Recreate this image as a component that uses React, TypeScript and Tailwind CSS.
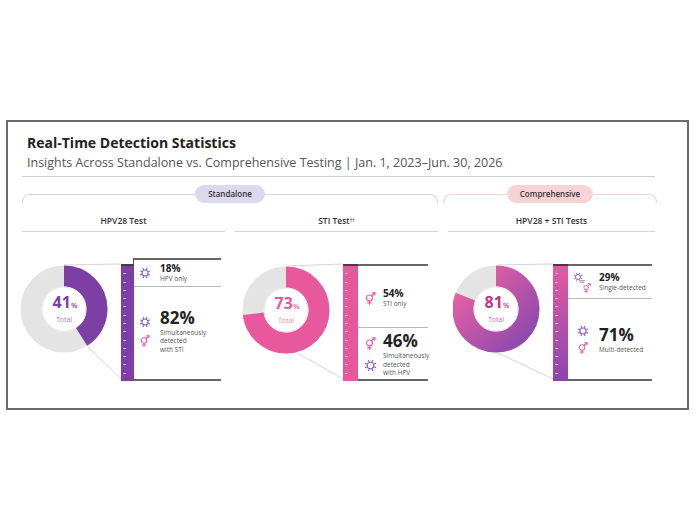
import type { ReactNode } from 'react';

// ── Colores ────────────────────────────────────────────────────────────────

const MORADO = '#7c3fa3';
const ROSA = '#e8589c';
const MAGENTA = '#c1358a';

// ── Iconos ─────────────────────────────────────────────────────────────────

function IconoVirus({ size = 12 }: { size?: number }) {
  const puntas = [0, 45, 90, 135, 180, 225, 270, 315];
  return (
    <svg width={size} height={size} viewBox="0 0 24 24" fill="none" stroke="#8e62c6" strokeWidth={2.2}>
      <circle cx="12" cy="12" r="6" />
      {puntas.map((a) => {
        const r = ((a + 22.5) * Math.PI) / 180;
        return (
          <g key={a}>
            <line x1={12 + 6 * Math.cos(r)} y1={12 + 6 * Math.sin(r)} x2={12 + 8.5 * Math.cos(r)} y2={12 + 8.5 * Math.sin(r)} />
            <circle cx={12 + 9.8 * Math.cos(r)} cy={12 + 9.8 * Math.sin(r)} r="1.4" fill="#8e62c6" stroke="none" />
          </g>
        );
      })}
    </svg>
  );
}

function IconoGenero({ size = 12 }: { size?: number }) {
  return (
    <svg width={size} height={size} viewBox="0 0 24 24" fill="none" stroke="#ea5fa2" strokeWidth={2.2} strokeLinecap="round">
      <circle cx="10" cy="11" r="5.5" />
      <line x1="10" y1="16.5" x2="10" y2="23" />
      <line x1="6.5" y1="20" x2="13.5" y2="20" />
      <line x1="14" y1="7" x2="20" y2="1.5" />
      <polyline points="15.5,1.5 20,1.5 20,6" />
    </svg>
  );
}

// ── Dona con líneas de conexión ─────────────────────────────────────────────

type PropsDona = {
  pct: number;
  cx: number;
  cy: number;
  color: string;
  colorTexto: string;
  numero: string;
  arriba: [number, number];
  abajo: [number, number];
  gradiente?: boolean;
  ancho?: number;
};

function Dona({ pct, cx, cy, color, colorTexto, numero, arriba, abajo, gradiente, ancho = 101 }: PropsDona) {
  const r = 33;
  const circ = 2 * Math.PI * r;
  const id = `g${numero}`;
  return (
    <svg width={ancho} height={123} className="shrink-0">
      <defs>
        <linearGradient id={id} x1="1" y1="0" x2="0" y2="1">
          <stop offset="0" stopColor="#ee62a3" />
          <stop offset="1" stopColor="#8a48ad" />
        </linearGradient>
      </defs>
      <line x1={arriba[0]} y1={arriba[1]} x2={ancho} y2={6} stroke="#d4d4d4" strokeWidth={1} />
      <line x1={abajo[0]} y1={abajo[1]} x2={ancho} y2={121} stroke="#d4d4d4" strokeWidth={1} />
      <circle cx={cx} cy={cy} r={r} fill="none" stroke="#e4e4e4" strokeWidth={21} />
      <circle
        cx={cx}
        cy={cy}
        r={r}
        fill="none"
        stroke={gradiente ? `url(#${id})` : color}
        strokeWidth={21}
        strokeDasharray={`${(circ * pct) / 100} ${circ}`}
        transform={`rotate(-90 ${cx} ${cy})`}
      />
      <circle cx={cx} cy={cy} r={22} fill="white" stroke="#e6e6e6" strokeWidth={1} />
      <text x={cx + 1} y={cy - 1} textAnchor="middle" fill={colorTexto} fontFamily="Open Sans, sans-serif">
        <tspan fontSize="16" fontWeight="700">{numero}</tspan>
        <tspan fontSize="7.5" fontWeight="600">%</tspan>
      </text>
      <text x={cx} y={cy + 12.5} textAnchor="middle" fill={colorTexto} fillOpacity={0.75} fontSize="7" fontFamily="Open Sans, sans-serif">
        Total
      </text>
    </svg>
  );
}

// ── Barra vertical con marcas ──────────────────────────────────────────────

function Barra({ clase }: { clase: string }) {
  return (
    <div className={`flex h-[117px] flex-col justify-evenly border-t-2 border-[#3f3f3f] pl-[2px] ${clase}`}>
      {Array.from({ length: 13 }).map((_, i) => (
        <div key={i} className="h-px w-[3px] bg-white/60" />
      ))}
    </div>
  );
}

// ── Texto de fila ──────────────────────────────────────────────────────────

function Etiqueta({ children }: { children: ReactNode }) {
  return <div className="text-[6.5px] leading-[8.5px] text-[#555]">{children}</div>;
}

function Cifra({ children, grande }: { children: ReactNode; grande?: boolean }) {
  return grande ? (
    <div className="text-[17px] font-bold leading-[23px] text-[#222]">{children}</div>
  ) : (
    <div className="text-[10px] font-bold leading-[13px] text-[#222]">{children}</div>
  );
}

function Grupo({ ancho, titulo, pill, linea }: { ancho: string; titulo: string; pill: string; linea: string }) {
  return (
    <div className={`flex h-[18px] ${ancho}`}>
      <div className={`mt-[9px] h-[9px] flex-1 rounded-tl-[8px] border-l border-t ${linea}`} />
      <div className={`flex h-[18px] items-center rounded-full px-[13px] text-[8px] font-semibold text-[#333] ${pill}`}>
        {titulo}
      </div>
      <div className={`mt-[9px] h-[9px] flex-1 rounded-tr-[8px] border-r border-t ${linea}`} />
    </div>
  );
}

function Encabezado({ children }: { children: ReactNode }) {
  return (
    <div className="border-b border-[#d3d3d3] pb-[4px] text-center text-[8.5px] font-semibold leading-[12px] text-[#333]">
      {children}
    </div>
  );
}

export default function App() {
  return (
    <div className="min-h-screen bg-white pl-[6px] pt-[120px] font-['Open_Sans',sans-serif]">
      <div className="h-[290px] w-[683px] border-2 border-[#6a6a6a] pl-[14px] pr-[30px] pt-[12px]">
        <div className="pl-[5px]">
          <h1 className="text-[14px] font-bold leading-[17px] text-[#222]">Real-Time Detection Statistics</h1>
          <p className="mt-[4px] text-[12.5px] leading-[16px] text-[#555]">
            Insights Across Standalone vs. Comprehensive Testing | Jan. 1, 2023–Jun. 30, 2026
          </p>
        </div>
        <div className="mt-[5px] h-px w-[633px] bg-[#cfcfcf]" />

        {/* Grupos: Standalone / Comprehensive */}
        <div className="mt-[8px] flex gap-[5px]">
          <Grupo ancho="w-[416px]" titulo="Standalone" pill="bg-[#dcd8ee]" linea="border-[#d8d5e6]" />
          <Grupo ancho="w-[214px]" titulo="Comprehensive" pill="bg-[#f8d3d3]" linea="border-[#f3d2d2]" />
        </div>

        <div className="mt-[12px] grid w-[633px] grid-cols-[203px_203px_207px] gap-x-[10px]">
          <Encabezado>HPV28 Test</Encabezado>
          <Encabezado>
            STI Test<sup className="text-[5px]">††</sup>
          </Encabezado>
          <Encabezado>HPV28 + STI Tests</Encabezado>

          {/* HPV28 */}
          <div className="mt-[26px] ml-[-2px] flex items-start">
            <Dona pct={41} cx={44} cy={51} color={MORADO} colorTexto={MORADO} numero="41" arriba={[44, 7]} abajo={[68, 89]} />
            <div className="flex w-[13px] flex-col">
              <div className="h-[6px] border-r border-[#555]" />
              <Barra clase="bg-[#7c3fa6]" />
            </div>
            <div className="flex h-[123px] w-[87px] flex-col border-y-2 border-[#666]">
              <div className="flex h-[26px] items-center gap-[9px] pl-[5px]">
                <IconoVirus />
                <div>
                  <Cifra>18%</Cifra>
                  <Etiqueta>HPV only</Etiqueta>
                </div>
              </div>
              <div className="h-px bg-[#b8b8b8]" />
              <div className="flex flex-1 items-center gap-[9px] pb-[6px] pl-[5px]">
                <div className="flex flex-col gap-[7px] pt-[2px]">
                  <IconoVirus />
                  <IconoGenero />
                </div>
                <div>
                  <Cifra grande>82%</Cifra>
                  <Etiqueta>
                    <div className="whitespace-nowrap">Simultaneously</div>
                    <div>detected</div>
                    <div>with STI</div>
                  </Etiqueta>
                </div>
              </div>
            </div>
          </div>

          {/* STI */}
          <div className="mt-[26px] ml-[7px] flex items-start">
            <Dona pct={73} cx={44} cy={52} color={ROSA} colorTexto={ROSA} numero="73" arriba={[45, 8]} abajo={[55, 95]} />
            <div className="mt-[6px] w-[15px]">
              <Barra clase="bg-[#e8589c]" />
            </div>
            <div className="mt-[6px] flex h-[117px] w-[70px] flex-col border-y-2 border-[#666]">
              <div className="flex h-[61px] items-center gap-[6px] pl-[6px] pt-[3px]">
                <IconoGenero size={13} />
                <div>
                  <Cifra>54%</Cifra>
                  <Etiqueta>STI only</Etiqueta>
                </div>
              </div>
              <div className="h-px bg-[#b8b8b8]" />
              <div className="flex flex-1 items-center gap-[6px] pl-[6px]">
                <div className="flex flex-col gap-[9px] pt-[2px]">
                  <IconoGenero size={13} />
                  <IconoVirus size={13} />
                </div>
                <div>
                  <Cifra grande>46%</Cifra>
                  <Etiqueta>
                    <div className="whitespace-nowrap">Simultaneously</div>
                    <div>detected</div>
                    <div>with HPV</div>
                  </Etiqueta>
                </div>
              </div>
            </div>
          </div>

          {/* HPV28 + STI */}
          <div className="mt-[26px] ml-[5px] flex items-start">
            <Dona pct={81} cx={43} cy={51} color={MAGENTA} colorTexto={MAGENTA} numero="81" arriba={[45, 7]} abajo={[45, 95]} gradiente ancho={100} />
            <div className="mt-[6px] w-[15px]">
              <Barra clase="bg-linear-to-b from-[#e6579f] to-[#8a45ad]" />
            </div>
            <div className="mt-[6px] flex h-[117px] w-[84px] flex-col border-y-2 border-[#666]">
              <div className="flex h-[32px] items-center gap-[6px] pl-[5px]">
                <div className="flex w-[20px] flex-col">
                  <IconoVirus size={10} />
                  <div className="ml-[7px] mt-[-3px] text-[5px] leading-[5px] text-[#444]">or</div>
                  <div className="ml-[9px] mt-[-1px]">
                    <IconoGenero size={10} />
                  </div>
                </div>
                <div>
                  <Cifra>29%</Cifra>
                  <Etiqueta>Single-detected</Etiqueta>
                </div>
              </div>
              <div className="h-px bg-[#b8b8b8]" />
              <div className="flex flex-1 items-center gap-[6px] pl-[5px]">
                <div className="flex w-[20px] flex-col items-center gap-[5px]">
                  <IconoVirus size={12} />
                  <IconoGenero size={12} />
                </div>
                <div>
                  <Cifra grande>71%</Cifra>
                  <Etiqueta>Multi-detected</Etiqueta>
                </div>
              </div>
            </div>
          </div>
        </div>
      </div>
    </div>
  );
}
